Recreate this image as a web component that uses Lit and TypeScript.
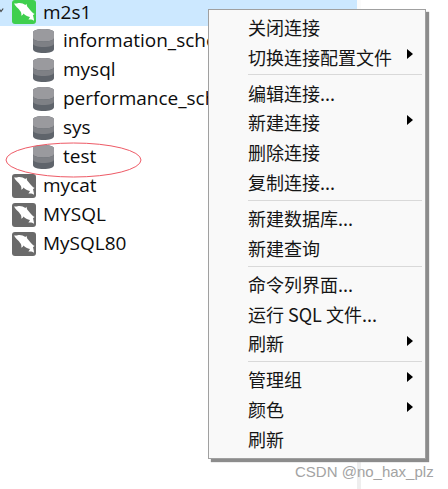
import { LitElement, html, css, svg } from "lit";
import { customElement } from "lit/decorators.js";

const dolphin = svg`<path d="M2 3.6 C3.6 3.2 4.6 3.6 5.6 3.2 C8.4 2.6 11.2 3.4 13.4 5 L14.4 3.8 L15.2 6.6 C17 8.4 18.4 10.6 20.4 12.4 C21.2 13.2 22 13.6 22.8 14 C21.8 14.4 21.2 14.8 21 15.6 C21.4 17 22 18.8 22 20.8 C20.6 19.6 18.6 19.2 16.4 19.6 C17 18.6 17.6 17.8 18 17 C15.4 16.6 13.2 15.4 11.4 13.6 C11 14.8 10.4 15.4 9.2 15.8 C9.6 14.4 9.4 13 8.6 11.6 C7.6 10 6.4 8.4 4.8 7.2 C3.8 6.4 2.8 5.2 2 3.6 Z" fill="#fff"/>`;

type Item = { label: string; arrow?: boolean } | "sep";

const items: Item[] = [
  { label: "关闭连接" },
  { label: "切换连接配置文件", arrow: true },
  "sep",
  { label: "编辑连接..." },
  { label: "新建连接", arrow: true },
  { label: "删除连接" },
  { label: "复制连接..." },
  "sep",
  { label: "新建数据库..." },
  { label: "新建查询" },
  "sep",
  { label: "命令列界面..." },
  { label: "运行 SQL 文件..." },
  { label: "刷新", arrow: true },
  "sep",
  { label: "管理组", arrow: true },
  { label: "颜色", arrow: true },
  { label: "刷新" },
];

@customElement("app-root")
export class AppRoot extends LitElement {
  static styles = css`
    :host {
      display: flex;
      position: relative;
      width: 448px;
      height: 489px;
      overflow: hidden;
      background: #fff;
      font-family: "Noto Sans CJK SC", "Liberation Sans", sans-serif;
      color: #111;
    }
    .tree {
      width: 357px;
      height: 489px;
      flex: none;
      display: flex;
      flex-direction: column;
      font-family: "Open Sans", "Liberation Sans", sans-serif;
      font-size: 19px;
      color: #0c0c0c;
    }
    .rail {
      width: 4px;
      height: 489px;
      flex: none;
      background: linear-gradient(#fbfbfb, #fbfbfb 40px, #eeeeee 449px);
    }
    .row {
      height: 29px;
      display: flex;
      align-items: center;
      white-space: nowrap;
      flex: none;
    }
    .row .label {
      position: relative;
      top: -1px;
    }
    .selected {
      height: 26px;
      background: #cce8ff;
      align-items: flex-start;
    }
    .selected .label {
      top: 0;
      margin-left: 7px;
      line-height: 24px;
    }
    .twisty {
      width: 12px;
      height: 26px;
      flex: none;
      display: block;
    }
    .conn { padding-left: 12px; gap: 7px; }
    .selected.conn { padding-left: 0; gap: 0; }
    .db { padding-left: 33px; gap: 9px; }
    .icon { flex: none; display: block; }
    .menu {
      position: absolute;
      left: 208px;
      top: 9px;
      width: 218px;
      height: 450px;
      box-sizing: border-box;
      background: #f9f9f9;
      border: 1px solid #a0a0a0;
      box-shadow: 3px 3px 1px #8c8c8c;
      padding: 3px 0 0 0;
      display: flex;
      flex-direction: column;
      font-size: 18px;
      color: #151515;
    }
    .item {
      height: 29.7px;
      flex: none;
      display: flex;
      align-items: center;
      padding-left: 39px;
      position: relative;
      white-space: nowrap;
    }
    .item .text {
      position: relative;
      top: -1px;
    }
    .arrow {
      position: absolute;
      left: 198px;
      top: 6.5px;
      width: 0;
      height: 0;
      border-left: 6px solid #000;
      border-top: 5px solid transparent;
      border-bottom: 5px solid transparent;
    }
    .sep {
      height: 1px;
      flex: none;
      background: #d9d9d9;
      margin: 2px 3px 3.5px 39px;
    }
    .ellipse {
      position: absolute;
      left: 5px;
      top: 142px;
    }
    .mark {
      position: absolute;
      left: 295px;
      top: 463px;
      font-family: "Liberation Sans", sans-serif;
      font-size: 15px;
      color: #a3a3a3;
      white-space: nowrap;
    }
  `;

  private conn(color: string) {
    return html`<svg class="icon" width="24" height="24" viewBox="0 0 24 24">
      <rect x="0" y="0" width="24" height="24" rx="3" fill=${color}></rect>
      ${dolphin}
    </svg>`;
  }

  private db() {
    return html`<svg class="icon" width="21" height="24" viewBox="0 0 21 24">
      <path d="M0 3.5 C0 1.2 4.5 0 10.5 0 C16.5 0 21 1.2 21 3.5 V20 C21 22.6 16.5 24 10.5 24 C4.5 24 0 22.6 0 20 Z" fill="#5f646b"></path>
      <path d="M0 3.5 C0 1.2 4.5 0 10.5 0 C16.5 0 21 1.2 21 3.5 V9 C21 11.2 16.5 12.4 10.5 12.4 C4.5 12.4 0 11.2 0 9 Z" fill="#9a9a9e"></path>
      <path d="M0 9 C0 11.2 4.5 12.4 10.5 12.4 C16.5 12.4 21 11.2 21 9 V14.5 C21 16.8 16.5 18 10.5 18 C4.5 18 0 16.8 0 14.5 Z" fill="#7e8085"></path>
    </svg>`;
  }

  render() {
    const dbs = ["information_schema", "mysql", "performance_schema", "sys", "test"];
    const conns = ["mycat", "MYSQL", "MySQL80"];
    return html`
      <div class="tree">
        <div class="row conn selected">
          <svg class="twisty" viewBox="0 0 12 26">
            <path d="M-1 8.5 L1 11.5 L3.2 8.5" fill="none" stroke="#444" stroke-width="1.2"></path>
          </svg>
          ${this.conn("#3fcf4e")}
          <span class="label">m2s1</span>
        </div>
        ${dbs.map((d) => html`<div class="row db">${this.db()}<span class="label">${d}</span></div>`)}
        ${conns.map((c) => html`<div class="row conn">${this.conn("#6a6a6a")}<span class="label">${c}</span></div>`)}
      </div>
      <div class="rail"></div>
      <svg class="ellipse" width="138" height="36" viewBox="0 0 138 36">
        <ellipse cx="68.5" cy="18" rx="67.5" ry="17" fill="none" stroke="#ee5a66" stroke-width="1"></ellipse>
      </svg>
      <div class="menu">
        ${items.map((it) =>
          it === "sep"
            ? html`<div class="sep"></div>`
            : html`<div class="item"><span class="text">${it.label}</span>${it.arrow ? html`<span class="arrow"></span>` : ""}</div>`
        )}
      </div>
      <div class="mark">CSDN @no_hax_plz</div>
    `;
  }
}
